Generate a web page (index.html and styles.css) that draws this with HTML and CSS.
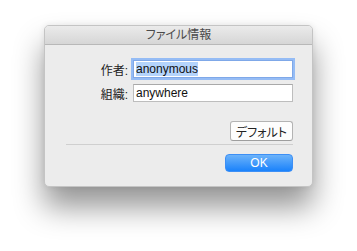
FILE: index.html
```html
<!DOCTYPE html>
<html lang="ja">
<head>
  <meta charset="UTF-8" />
  <title>ファイル情報</title>
  <link rel="stylesheet" href="styles.css">
</head>
<body>

  <div class="window">
    <div class="titlebar">ファイル情報</div>
    <div class="content">
      <div class="form">
        <label class="label">作者:</label>
        <div class="field focused"><span class="selected">anonymous</span></div>
        <label class="label">組織:</label>
        <div class="field">anywhere</div>
      </div>
      <div class="actions">
        <button class="btn">デフォルト</button>
      </div>
      <div class="separator"></div>
      <div class="actions">
        <button class="btn primary">OK</button>
      </div>
    </div>
  </div>

</body>
</html>
```

FILE: styles.css
```css
body {
  margin: 0;
  background: #fff;
  width: 357px;
  height: 251px;
  overflow: hidden;
  font-family: "Liberation Sans", "Noto Sans CJK JP", sans-serif;
  font-size: 12px;
  color: #222;
  font-feature-settings: "palt";
}

.window {
  margin: 25px 0 0 44px;
  width: 269px;
  height: 162px;
  box-sizing: border-box;
  background: #ececec;
  border: 1px solid #c4c4c4;
  border-radius: 5px;
  box-shadow: 0 20px 30px rgba(0,0,0,0.42), 0 0 6px rgba(0,0,0,0.08);
  overflow: hidden;
}

.titlebar {
  height: 18px;
  line-height: 18px;
  text-align: center;
  font-size: 12px;
  color: #4a4a4a;
  background: linear-gradient(#ebebeb, #d6d6d6);
  border-bottom: 1px solid #b8b8b8;
}

.content {
  padding: 15px 19px 0 20px;
}

.form {
  display: grid;
  grid-template-columns: auto 160px;
  justify-content: end;
  align-items: center;
  column-gap: 5px;
  row-gap: 6px;
}

.label {
  text-align: right;
  color: #222;
}

.field {
  height: 18px;
  line-height: 17px;
  box-sizing: border-box;
  padding: 0 2px;
  background: #fff;
  border: 1px solid #bdbdbd;
  border-top-color: #a9a9a9;
  color: #111;
}

.field.focused {
  border-color: #7fa8e8;
  box-shadow: 0 0 0 2px #95bcf5;
}

.selected {
  background: #b4d4fc;
}

.actions {
  display: flex;
  justify-content: flex-end;
}

.form + .actions {
  margin-top: 19px;
}

.btn {
  font-family: "Liberation Sans", "Noto Sans CJK JP", sans-serif;
  font-feature-settings: "palt";
  font-size: 12px;
  height: 20px;
  width: 63px;
  padding: 0;
  background: #fdfdfd;
  color: #222;
  border: 1px solid #b3b3b3;
  border-bottom-color: #9e9e9e;
  border-radius: 3px;
}

.separator {
  height: 1px;
  background: #cfcfcf;
  margin: 3px 0 9px 1px;
}

.btn.primary {
  width: 68px;
  height: 18px;
  color: #fff;
  font-size: 12px;
  background: linear-gradient(#6cb3fa, #1a82fb);
  border: 1px solid #3d8ff5;
  border-radius: 4px;
}
```
